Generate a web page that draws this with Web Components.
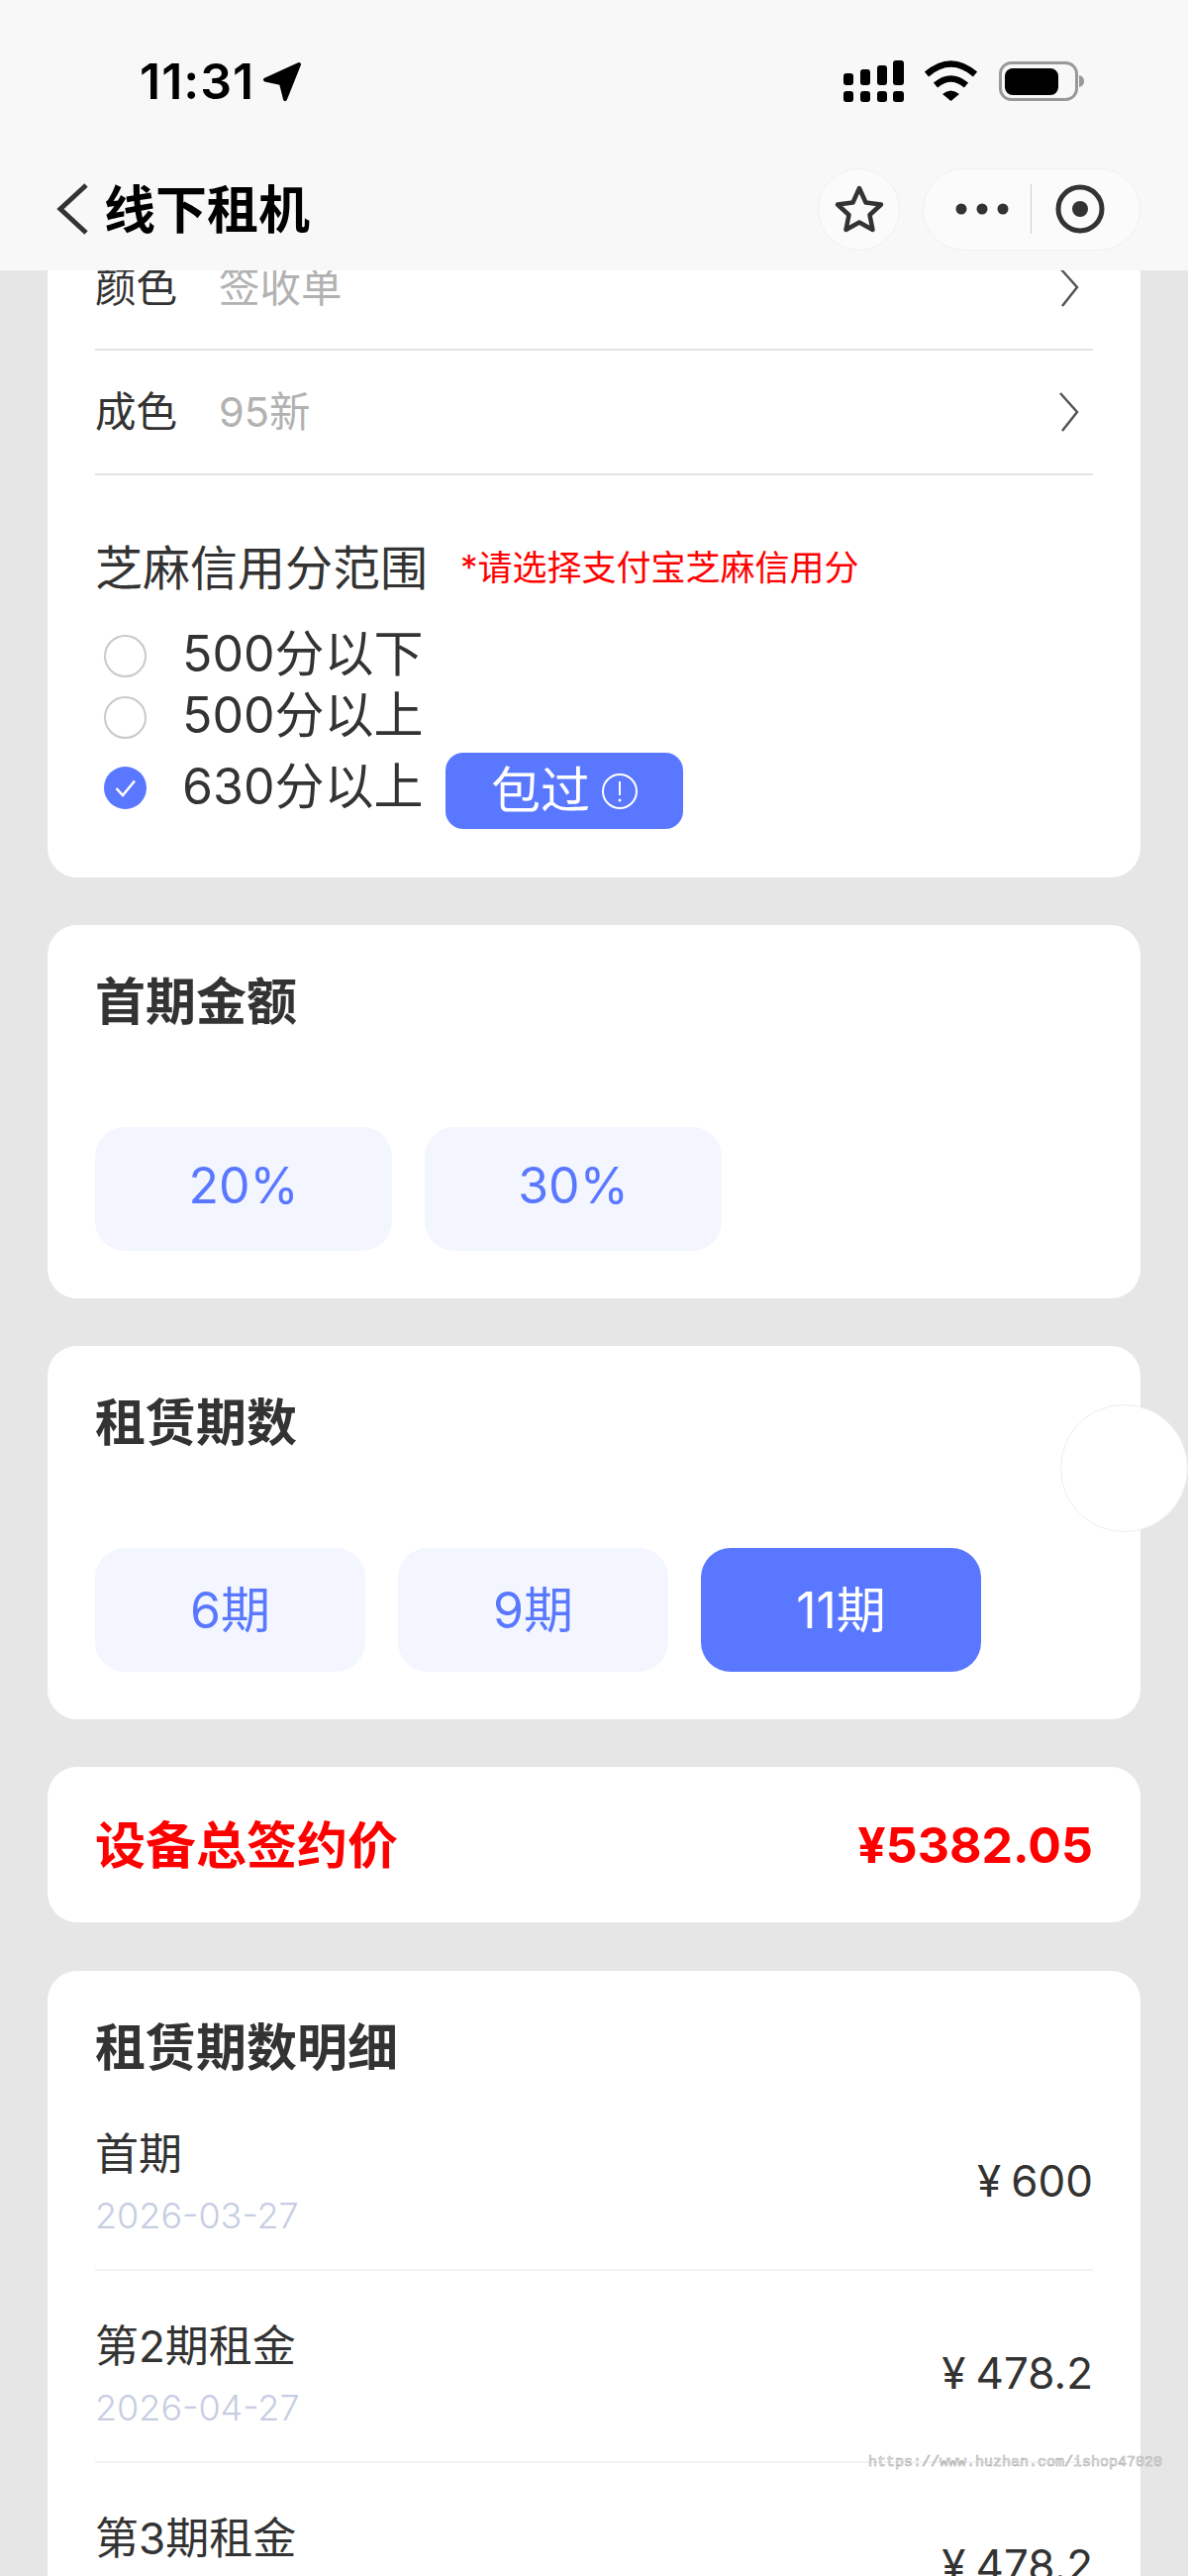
<!DOCTYPE html>
<html lang="zh">
<head>
<meta charset="utf-8">
<title>线下租机</title>
<style>
    html, body { margin: 0; background: #e6e6e6; }
    body {
        font-family: Inter, "Noto Sans CJK SC", sans-serif;
        color: #333;
    }
</style>
</head>
<body>
<rent-page>
    <status-bar slot="top"></status-bar>
    <nav-bar slot="top" title="线下租机"></nav-bar>

    <app-card style="margin-top:-45px;border-top-left-radius:0;border-top-right-radius:0;padding-bottom:49px">
        <form-row label="颜色" value="签收单"></form-row>
        <form-row label="成色" value="95新"></form-row>
        <credit-group label="芝麻信用分范围" hint="*请选择支付宝芝麻信用分">
            <radio-option>500分以下</radio-option>
            <radio-option>500分以上</radio-option>
            <radio-option checked tagged>630分以上<info-tag slot="tag">包过</info-tag></radio-option>
        </credit-group>
    </app-card>

    <app-card heading="首期金额">
        <option-list>
            <option-button style="width:300px">20%</option-button>
            <option-button style="width:300px">30%</option-button>
        </option-list>
    </app-card>

    <app-card heading="租赁期数">
        <option-list>
            <option-button style="width:273px">6期</option-button>
            <option-button style="width:273px">9期</option-button>
            <option-button style="width:283px" active>11期</option-button>
        </option-list>
    </app-card>

    <total-card label="设备总签约价" price="¥5382.05"></total-card>

    <app-card heading="租赁期数明细" flat style="margin-top:1px">
        <period-row name="首期" date="2026-03-27" price="600"></period-row>
        <period-row name="第2期租金" date="2026-04-27" price="478.2"></period-row>
        <period-row name="第3期租金" date="2026-05-27" price="478.2"></period-row>
    </app-card>

    <float-ball slot="over"></float-ball>
    <water-mark slot="over">https://www.huzhan.com/ishop47020</water-mark>
</rent-page>

<script>
class RentPage extends HTMLElement {
    constructor() {
        super();
        this.attachShadow({ mode: 'open' }).innerHTML = `
            <style>
                :host {
                    display: flex;
                    flex-direction: column;
                    position: relative;
                    height: 2601px;
                    overflow: hidden;
                    background: #e6e6e6;
                }
                .top { position: relative; z-index: 2; background: #f8f8f8; }
                .scroll {
                    flex: 1;
                    min-height: 0;
                    display: flex;
                    flex-direction: column;
                    gap: 48px;
                    padding: 0 48px;
                }
            </style>
            <div class="top"><slot name="top"></slot></div>
            <div class="scroll"><slot></slot></div>
            <slot name="over"></slot>
        `;
    }
}

class StatusBar extends HTMLElement {
    constructor() {
        super();
        this.attachShadow({ mode: 'open' }).innerHTML = `
            <style>
                :host {
                    display: flex;
                    align-items: center;
                    justify-content: space-between;
                    height: 163px;
                    padding: 0 105px 0 141px;
                    box-sizing: border-box;
                }
                .time {
                    display: flex;
                    align-items: center;
                    gap: 8px;
                    font: 600 50px/60px Inter, sans-serif;
                    letter-spacing: 1px;
                    color: #000;
                }
                svg { display: block; }
            </style>
            <div class="time">
                <span>11:31</span>
                <svg width="40" height="40" viewBox="0 0 40 40">
                    <path d="M37 3 3 18.500 19 22 23 38Z" fill="#000" stroke="#000" stroke-width="4" stroke-linejoin="round"/>
                </svg>
            </div>
            <svg width="245" height="44" viewBox="850 58 245 44">
                <g fill="#000">
                    <rect x="852" y="90" width="10" height="11" rx="3"/>
                    <rect x="869" y="90" width="10" height="11" rx="3"/>
                    <rect x="886" y="90" width="10" height="11" rx="3"/>
                    <rect x="902" y="90" width="11" height="11" rx="3"/>
                    <rect x="852" y="72" width="10" height="12" rx="3"/>
                    <rect x="869" y="68" width="10" height="16" rx="3"/>
                    <rect x="886" y="64" width="10" height="20" rx="3"/>
                    <rect x="902" y="59" width="11" height="25" rx="3"/>
                </g>
                <g fill="none" stroke="#000" stroke-width="6.500">
                    <path d="M936 73Q960.500 52 985 73"/>
                    <path d="M945 84Q960.500 71 976 84"/>
                </g>
                <path d="M952 93Q960.500 86 969 93L960.500 100Z" fill="#000"/>
                <rect x="1010.500" y="61.500" width="77" height="37" rx="11" fill="none" stroke="#999" stroke-width="3"/>
                <rect x="1015" y="67" width="54" height="27" rx="8" fill="#000"/>
                <path d="M1090 74Q1095 75 1095 80Q1095 85 1090 86Z" fill="#999"/>
            </svg>
        `;
    }
}

class NavBar extends HTMLElement {
    constructor() {
        super();
        this.attachShadow({ mode: 'open' }).innerHTML = `
            <style>
                :host {
                    display: flex;
                    align-items: center;
                    height: 110px;
                    padding: 0 48px 14px 56px;
                    box-sizing: border-box;
                }
                svg { display: block; }
                h1 {
                    margin: 0 0 4px 15px;
                    flex: 1;
                    font: 600 52px/70px "Noto Sans CJK SC", sans-serif;
                    color: #000;
                }
                .star, .capsule {
                    height: 83px;
                    box-sizing: border-box;
                    background: #fbfbfb;
                    border: 1px solid #f0f0f0;
                    display: flex;
                    align-items: center;
                    justify-content: center;
                }
                .star { width: 83px; border-radius: 50%; margin-right: 23px; }
                .capsule { width: 220px; border-radius: 42px; }
            </style>
            <svg width="34" height="54" viewBox="0 0 34 54">
                <path d="M31 3 5 27 31 51" fill="none" stroke="#333" stroke-width="5"/>
            </svg>
            <h1>${this.getAttribute('title')}</h1>
            <div class="star">
                <svg width="52" height="50" viewBox="0 0 52 50">
                    <path d="M26 4 32.500 18.500 48 20.500 36.500 31 39.500 46 26 38.500 12.500 46 15.500 31 4 20.500 19.500 18.500Z"
                        fill="none" stroke="#333" stroke-width="4.500" stroke-linejoin="round"/>
                </svg>
            </div>
            <div class="capsule">
                <svg width="218" height="60" viewBox="0 0 218 60">
                    <g fill="#333">
                        <circle cx="38" cy="30" r="5.500"/>
                        <circle cx="59" cy="30" r="5.500"/>
                        <circle cx="80" cy="30" r="5.500"/>
                        <circle cx="158" cy="30" r="8"/>
                    </g>
                    <path d="M108.500 5V55" stroke="#ccc" stroke-width="1"/>
                    <circle cx="158" cy="30" r="22" fill="none" stroke="#333" stroke-width="5"/>
                </svg>
            </div>
        `;
    }
}

class AppCard extends HTMLElement {
    constructor() {
        super();
        const heading = this.getAttribute('heading');
        this.attachShadow({ mode: 'open' }).innerHTML = `
            <style>
                :host {
                    display: block;
                    flex: none;
                    background: #fff;
                    border-radius: 30px;
                    padding: 0 48px 48px;
                }
                :host([heading]) { padding-top: 44px; }
                h2 {
                    margin: 0 0 100px;
                    font: 700 51px/60px "Noto Sans CJK SC", sans-serif;
                    color: #333;
                }
                :host([flat]) h2 { margin-bottom: 5px; }
            </style>
            ${heading ? `<h2>${heading}</h2>` : ''}
            <slot></slot>
        `;
    }
}

class FormRow extends HTMLElement {
    constructor() {
        super();
        this.attachShadow({ mode: 'open' }).innerHTML = `
            <style>
                :host {
                    display: flex;
                    align-items: center;
                    height: 126px;
                    box-sizing: border-box;
                    border-bottom: 2px solid #e3e3e3;
                    font-size: 41.500px;
                    line-height: 60px;
                }
                .label { width: 125px; color: #333; }
                .value { flex: 1; color: #b2b2b2; }
                svg { display: block; margin-right: 12px; }
            </style>
            <span class="label">${this.getAttribute('label')}</span>
            <span class="value">${this.getAttribute('value')}</span>
            <svg width="24" height="42" viewBox="0 0 24 42">
                <path d="M3 2 20 21 5 40" fill="none" stroke="#555" stroke-width="2.500"/>
            </svg>
        `;
    }
}

class CreditGroup extends HTMLElement {
    constructor() {
        super();
        this.attachShadow({ mode: 'open' }).innerHTML = `
            <style>
                :host { display: block; padding-top: 60px; }
                .head {
                    display: flex;
                    align-items: center;
                    gap: 33px;
                    height: 60px;
                    margin-bottom: 31px;
                    font-size: 48px;
                    color: #333;
                }
                .hint { font-size: 35px; color: #f00; }
            </style>
            <div class="head">
                <span>${this.getAttribute('label')}</span>
                <span class="hint">${this.getAttribute('hint')}</span>
            </div>
            <slot></slot>
        `;
    }
}

class RadioOption extends HTMLElement {
    constructor() {
        super();
        const checked = this.hasAttribute('checked');
        this.attachShadow({ mode: 'open' }).innerHTML = `
            <style>
                :host {
                    display: flex;
                    align-items: center;
                    height: 62px;
                    padding-left: 9px;
                    font-size: 50px;
                    line-height: 62px;
                    color: #333;
                }
                :host([tagged]) {
                    height: 77px;
                    margin-top: 5px;
                }
                .text { position: relative; top: -2px; }
                :host([tagged]) .dot { position: relative; top: -3px; }
                :host([tagged]) .text { top: -5px; }
                .dot { display: block; flex: none; margin-right: 36px; }
                .tag { margin-left: 23px; }
            </style>
            <svg class="dot" width="43" height="43" viewBox="0 0 43 43">
                ${checked
                    ? `<circle cx="21.500" cy="21.500" r="21.500" fill="#5a78ff"/>
                       <path d="M12.500 22 19 29 31 14.500" fill="none" stroke="#fff" stroke-width="2.500"/>`
                    : `<circle cx="21.500" cy="21.500" r="20.500" fill="#fff" stroke="#c9c9c9" stroke-width="2"/>`}
            </svg>
            <span class="text"><slot></slot></span>
            <span class="tag"><slot name="tag"></slot></span>
        `;
    }
}

class InfoTag extends HTMLElement {
    constructor() {
        super();
        this.attachShadow({ mode: 'open' }).innerHTML = `
            <style>
                :host {
                    display: flex;
                    align-items: center;
                    justify-content: center;
                    gap: 11px;
                    width: 240px;
                    height: 77px;
                    border-radius: 18px;
                    background: #5a78ff;
                    color: #fff;
                    font-size: 50px;
                    line-height: 77px;
                }
                svg { display: block; }
            </style>
            <slot></slot>
            <svg width="38" height="38" viewBox="0 0 38 38">
                <circle cx="19" cy="19" r="17" fill="none" stroke="#fff" stroke-width="2"/>
                <path d="M19 9V23" stroke="#fff" stroke-width="2"/>
                <circle cx="19" cy="28" r="1.500" fill="#fff"/>
            </svg>
        `;
    }
}

class OptionList extends HTMLElement {
    constructor() {
        super();
        this.attachShadow({ mode: 'open' }).innerHTML = `
            <style>
                :host { display: flex; gap: 33px; }
            </style>
            <slot></slot>
        `;
    }
}

class OptionButton extends HTMLElement {
    constructor() {
        super();
        this.attachShadow({ mode: 'open' }).innerHTML = `
            <style>
                :host {
                    display: flex;
                    align-items: center;
                    justify-content: center;
                    height: 125px;
                    box-sizing: border-box;
                    padding-bottom: 7px;
                    border-radius: 30px;
                    background: #f3f6ff;
                    color: #5a78ff;
                    font-size: 50px;
                }
                :host([active]) { background: #5a78ff; color: #fff; }
            </style>
            <slot></slot>
        `;
    }
}

class TotalCard extends HTMLElement {
    constructor() {
        super();
        this.attachShadow({ mode: 'open' }).innerHTML = `
            <style>
                :host {
                    display: flex;
                    flex: none;
                    align-items: center;
                    justify-content: space-between;
                    height: 157px;
                    padding: 0 48px;
                    background: #fff;
                    border-radius: 30px;
                    color: #f00;
                    font-weight: 700;
                }
                .label { font-size: 51px; padding-bottom: 6px; }
                .price { font-size: 50px; }
            </style>
            <span class="label">${this.getAttribute('label')}</span>
            <span class="price">${this.getAttribute('price')}</span>
        `;
    }
}

class PeriodRow extends HTMLElement {
    constructor() {
        super();
        this.attachShadow({ mode: 'open' }).innerHTML = `
            <style>
                :host {
                    display: flex;
                    align-items: center;
                    justify-content: space-between;
                    height: 194px;
                    box-sizing: border-box;
                    padding: 43px 0 25px;
                    border-bottom: 2px solid #f3f3f3;
                }
                .name { font-size: 44px; line-height: 66px; color: #333; }
                .date { font-size: 36px; font-weight: 300; line-height: 58px; color: #c6cde2; }
                .price { font-size: 44px; color: #333; padding-bottom: 5px; }
                .yen { margin-right: 10px; }
            </style>
            <div>
                <div class="name">${this.getAttribute('name')}</div>
                <div class="date">${this.getAttribute('date')}</div>
            </div>
            <div class="price"><span class="yen">¥</span>${this.getAttribute('price')}</div>
        `;
    }
}

class FloatBall extends HTMLElement {
    constructor() {
        super();
        this.attachShadow({ mode: 'open' }).innerHTML = `
            <style>
                :host {
                    position: absolute;
                    left: 1071px;
                    top: 1418px;
                    width: 129px;
                    height: 129px;
                    box-sizing: border-box;
                    border: 1px solid #eee;
                    border-radius: 50%;
                    background: #fff;
                }
            </style>
        `;
    }
}

class WaterMark extends HTMLElement {
    constructor() {
        super();
        this.attachShadow({ mode: 'open' }).innerHTML = `
            <style>
                :host {
                    position: absolute;
                    left: 877px;
                    top: 2477px;
                    font: 15px/20px "Liberation Mono", monospace;
                    white-space: nowrap;
                    color: rgba(255, 255, 255, 0.7);
                    -webkit-text-stroke: 0.6px #a8a8a8;
                }
            </style>
            <slot></slot>
        `;
    }
}

customElements.define('rent-page', RentPage);
customElements.define('status-bar', StatusBar);
customElements.define('nav-bar', NavBar);
customElements.define('app-card', AppCard);
customElements.define('form-row', FormRow);
customElements.define('credit-group', CreditGroup);
customElements.define('radio-option', RadioOption);
customElements.define('info-tag', InfoTag);
customElements.define('option-list', OptionList);
customElements.define('option-button', OptionButton);
customElements.define('total-card', TotalCard);
customElements.define('period-row', PeriodRow);
customElements.define('float-ball', FloatBall);
customElements.define('water-mark', WaterMark);
</script>
</body>
</html>
